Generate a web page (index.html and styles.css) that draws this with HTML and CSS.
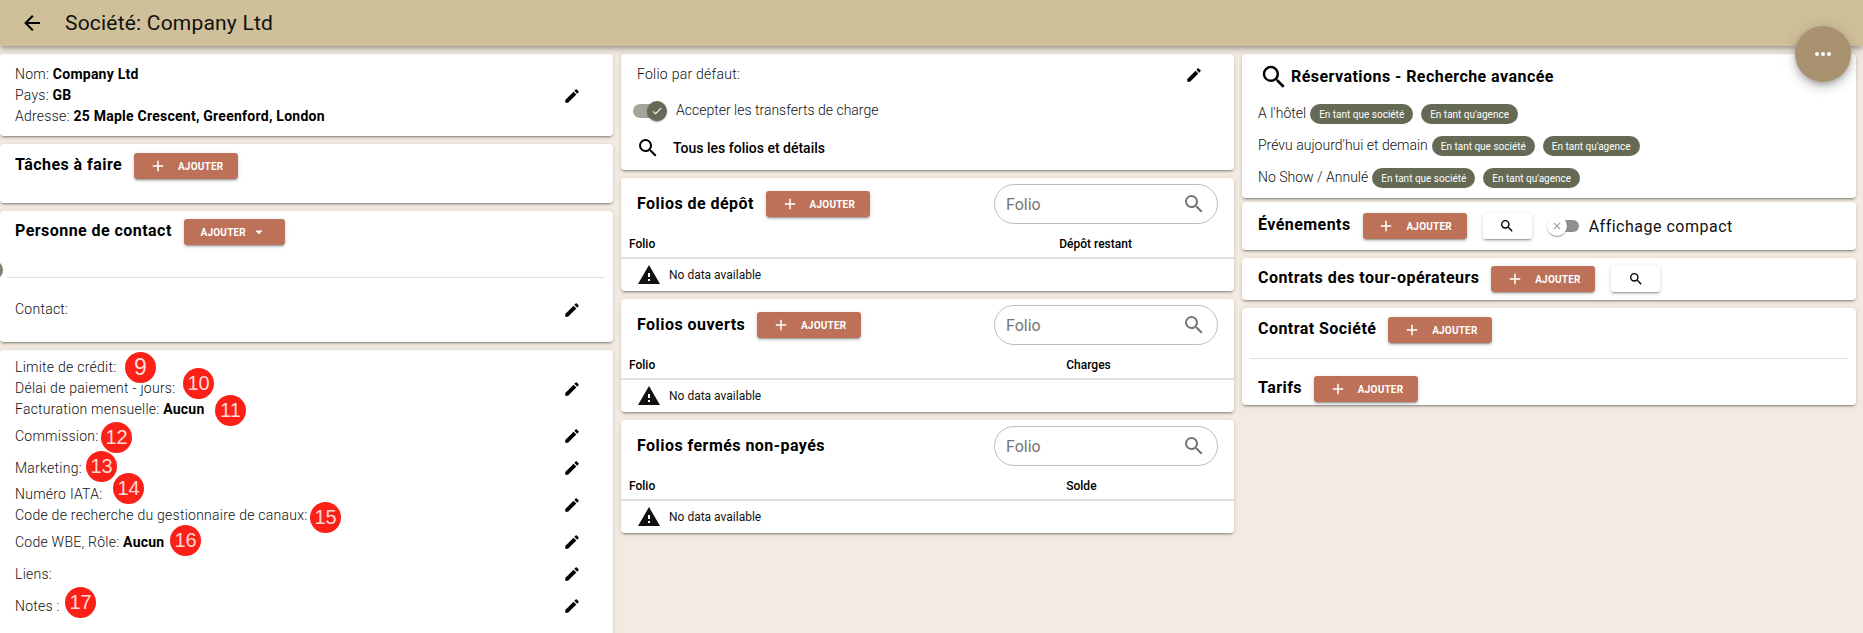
FILE: index.html
```html
<!DOCTYPE html>
<html lang="fr">
<head>
<meta charset="utf-8">
<title>Société: Company Ltd</title>
<link rel="stylesheet" href="styles.css">
</head>
<body>
<svg class="sprite" aria-hidden="true">
  <symbol id="i-pencil" viewBox="0 0 24 24"><path d="M20.71,7.04C21.1,6.65 21.1,6 20.71,5.63L18.37,3.29C18,2.9 17.35,2.9 16.96,3.29L15.12,5.12L18.87,8.87M3,17.25V21H6.75L17.81,9.93L14.06,6.18L3,17.25Z"/></symbol>
  <symbol id="i-search" viewBox="0 0 24 24"><path d="M9.5,3A6.5,6.5 0 0,1 16,9.5C16,11.11 15.41,12.59 14.44,13.73L14.71,14H15.5L20.5,19L19,20.5L14,15.5V14.71L13.73,14.44C12.59,15.41 11.11,16 9.5,16A6.5,6.5 0 0,1 3,9.5A6.5,6.5 0 0,1 9.5,3M9.5,5C7,5 5,7 5,9.5C5,12 7,14 9.5,14C12,14 14,12 14,9.5C14,7 12,5 9.5,5Z"/></symbol>
  <symbol id="i-plus" viewBox="0 0 24 24"><path d="M19,13H13V19H11V13H5V11H11V5H13V11H19V13Z"/></symbol>
  <symbol id="i-back" viewBox="0 0 24 24"><path d="M20,11V13H8L13.5,18.5L12.08,19.92L4.16,12L12.08,4.08L13.5,5.5L8,11H20Z"/></symbol>
  <symbol id="i-alert" viewBox="0 0 24 24"><path d="M13,14H11V10H13M13,18H11V16H13M1,21H23L12,2L1,21Z"/></symbol>
  <symbol id="i-down" viewBox="0 0 24 24"><path d="M7,10L12,15L17,10H7Z"/></symbol>
  <symbol id="i-dots" viewBox="0 0 24 24"><path d="M16,12A2,2 0 0,1 18,10A2,2 0 0,1 20,12A2,2 0 0,1 18,14A2,2 0 0,1 16,12M10,12A2,2 0 0,1 12,10A2,2 0 0,1 14,12A2,2 0 0,1 12,14A2,2 0 0,1 10,12M4,12A2,2 0 0,1 6,10A2,2 0 0,1 8,12A2,2 0 0,1 6,14A2,2 0 0,1 4,12Z"/></symbol>
  <symbol id="i-check" viewBox="0 0 24 24"><path d="M21,7L9,19L3.5,13.5L4.91,12.09L9,16.17L19.59,5.59L21,7Z"/></symbol>
  <symbol id="i-close" viewBox="0 0 24 24"><path d="M19,6.41L17.59,5L12,10.59L6.41,5L5,6.41L10.59,12L5,17.59L6.41,19L12,13.41L17.59,19L19,17.59L13.41,12L19,6.41Z"/></symbol>
</svg>

<header class="topbar">
  <svg class="icon icon-24 back"><use href="#i-back"/></svg>
  <h1 class="page-title">Société: Company Ltd</h1>
</header>

<button class="fab" type="button" aria-label="Menu"><svg class="icon icon-24"><use href="#i-dots"/></svg></button>
<span class="edge-dot"></span>

<main class="columns">
  <section class="col">
    <div class="card card-info">
      <div class="edit-row">
        <div>
          <div class="line">Nom: <b>Company Ltd</b></div>
          <div class="line">Pays: <b>GB</b></div>
          <div class="line">Adresse: <b>25 Maple Crescent, Greenford, London</b></div>
        </div>
        <svg class="icon icon-18 pencil"><use href="#i-pencil"/></svg>
      </div>
    </div>

    <div class="card card-tasks">
      <div class="head-row">
        <h2 class="heading">Tâches à faire</h2>
        <button class="btn" type="button"><svg class="icon icon-18"><use href="#i-plus"/></svg><span>Ajouter</span></button>
      </div>
    </div>

    <div class="card card-contact">
      <div class="head-row">
        <h2 class="heading">Personne de contact</h2>
        <button class="btn btn-menu" type="button"><span>Ajouter</span><svg class="icon icon-18"><use href="#i-down"/></svg></button>
      </div>
      <hr class="divider contact-divider">
      <div class="edit-row contact-row">
        <div class="line">Contact:</div>
        <svg class="icon icon-18 pencil"><use href="#i-pencil"/></svg>
      </div>
    </div>

    <div class="card card-details">
      <div class="edit-row">
        <div>
          <div class="line">Limite de crédit:</div>
          <div class="line">Délai de paiement - jours:</div>
          <div class="line">Facturation mensuelle: <b>Aucun</b></div>
        </div>
        <svg class="icon icon-18 pencil"><use href="#i-pencil"/></svg>
      </div>
      <div class="edit-row single"><div class="line">Commission:</div><svg class="icon icon-18 pencil"><use href="#i-pencil"/></svg></div>
      <div class="edit-row single"><div class="line">Marketing:</div><svg class="icon icon-18 pencil"><use href="#i-pencil"/></svg></div>
      <div class="edit-row">
        <div>
          <div class="line">Numéro IATA:</div>
          <div class="line">Code de recherche du gestionnaire de canaux:</div>
        </div>
        <svg class="icon icon-18 pencil"><use href="#i-pencil"/></svg>
      </div>
      <div class="edit-row single"><div class="line">Code WBE, Rôle: <b>Aucun</b></div><svg class="icon icon-18 pencil"><use href="#i-pencil"/></svg></div>
      <div class="edit-row single"><div class="line">Liens:</div><svg class="icon icon-18 pencil"><use href="#i-pencil"/></svg></div>
      <div class="edit-row single"><div class="line">Notes :</div><svg class="icon icon-18 pencil"><use href="#i-pencil"/></svg></div>

      <span class="badge badge-large b9">9</span>
      <span class="badge b10">10</span>
      <span class="badge b11">11</span>
      <span class="badge b12">12</span>
      <span class="badge b13">13</span>
      <span class="badge b14">14</span>
      <span class="badge b15">15</span>
      <span class="badge b16">16</span>
      <span class="badge b17">17</span>
    </div>
  </section>

  <section class="col">
    <div class="card card-folio">
      <div class="folio-default">
        <div class="line">Folio par défaut:</div>
        <svg class="icon icon-18"><use href="#i-pencil"/></svg>
      </div>
      <div class="switch-row">
        <span class="switch switch-on"><span class="thumb"><svg class="icon icon-12"><use href="#i-check"/></svg></span></span>
        <span class="line">Accepter les transferts de charge</span>
      </div>
      <div class="all-folios">
        <svg class="icon icon-24"><use href="#i-search"/></svg>
        <span>Tous les folios et détails</span>
      </div>
    </div>

    <div class="card">
      <div class="table-head">
        <h2 class="heading">Folios de dépôt</h2>
        <button class="btn" type="button"><svg class="icon icon-18"><use href="#i-plus"/></svg><span>Ajouter</span></button>
        <div class="search"><span>Folio</span><svg class="icon icon-24"><use href="#i-search"/></svg></div>
      </div>
      <div class="thead"><span>Folio</span><span class="col-deposit">Dépôt restant</span></div>
      <div class="nodata"><svg class="icon icon-24"><use href="#i-alert"/></svg><span>No data available</span></div>
    </div>

    <div class="card">
      <div class="table-head">
        <h2 class="heading">Folios ouverts</h2>
        <button class="btn" type="button"><svg class="icon icon-18"><use href="#i-plus"/></svg><span>Ajouter</span></button>
        <div class="search"><span>Folio</span><svg class="icon icon-24"><use href="#i-search"/></svg></div>
      </div>
      <div class="thead"><span>Folio</span><span class="col-amount">Charges</span></div>
      <div class="nodata"><svg class="icon icon-24"><use href="#i-alert"/></svg><span>No data available</span></div>
    </div>

    <div class="card">
      <div class="table-head">
        <h2 class="heading">Folios fermés non-payés</h2>
        <div class="search"><span>Folio</span><svg class="icon icon-24"><use href="#i-search"/></svg></div>
      </div>
      <div class="thead"><span>Folio</span><span class="col-amount">Solde</span></div>
      <div class="nodata"><svg class="icon icon-24"><use href="#i-alert"/></svg><span>No data available</span></div>
    </div>
  </section>

  <section class="col col-right">
    <div class="card card-resa">
      <div class="resa-title">
        <svg class="icon icon-30"><use href="#i-search"/></svg>
        <h2 class="heading">Réservations - Recherche avancée</h2>
      </div>
      <div class="resa-row"><span class="line">A l'hôtel</span><span class="chip">En tant que société</span><span class="chip">En tant qu'agence</span></div>
      <div class="resa-row"><span class="line">Prévu aujourd'hui et demain</span><span class="chip">En tant que société</span><span class="chip">En tant qu'agence</span></div>
      <div class="resa-row"><span class="line">No Show / Annulé</span><span class="chip">En tant que société</span><span class="chip">En tant qu'agence</span></div>
    </div>

    <div class="card card-events">
      <div class="head-row">
        <h2 class="heading">Événements</h2>
        <button class="btn" type="button"><svg class="icon icon-18"><use href="#i-plus"/></svg><span>Ajouter</span></button>
        <button class="btn-white" type="button" aria-label="Rechercher"><svg class="icon icon-16"><use href="#i-search"/></svg></button>
        <span class="switch switch-off"><span class="thumb"><svg class="icon icon-12"><use href="#i-close"/></svg></span></span>
        <span class="compact-label">Affichage compact</span>
      </div>
    </div>

    <div class="card card-tour">
      <div class="head-row">
        <h2 class="heading">Contrats des tour-opérateurs</h2>
        <button class="btn" type="button"><svg class="icon icon-18"><use href="#i-plus"/></svg><span>Ajouter</span></button>
        <button class="btn-white" type="button" aria-label="Rechercher"><svg class="icon icon-16"><use href="#i-search"/></svg></button>
      </div>
    </div>

    <div class="card card-contract">
      <div class="head-row">
        <h2 class="heading">Contrat Société</h2>
        <button class="btn" type="button"><svg class="icon icon-18"><use href="#i-plus"/></svg><span>Ajouter</span></button>
      </div>
      <hr class="divider contract-divider">
      <div class="head-row rates-row">
        <h2 class="heading">Tarifs</h2>
        <button class="btn" type="button"><svg class="icon icon-18"><use href="#i-plus"/></svg><span>Ajouter</span></button>
      </div>
    </div>
  </section>
</main>
</body>
</html>
```

FILE: styles.css
```css
* { box-sizing: border-box; }
html, body { margin: 0; height: 633px; overflow: hidden; }
body {
  position: relative;
  background: #f3ebe1;
  color: #000;
  font-family: Roboto, "Liberation Sans", sans-serif;
  font-size: 14px;
}
.sprite { position: absolute; width: 0; height: 0; }
.icon { display: block; flex: none; fill: currentColor; }
.icon-12 { width: 12px; height: 12px; }
.icon-16 { width: 16px; height: 16px; }
.icon-18 { width: 18px; height: 18px; }
.icon-24 { width: 24px; height: 24px; }
.icon-30 { width: 30px; height: 30px; }

.topbar {
  position: relative;
  z-index: 2;
  display: flex;
  align-items: center;
  gap: 21px;
  height: 46px;
  padding-left: 20px;
  background: #cfc09a;
  box-shadow: 0 2px 4px -1px rgba(0,0,0,.2), 0 4px 5px rgba(0,0,0,.14), 0 1px 10px rgba(0,0,0,.12);
}
.page-title { margin: 0; font-size: 21px; font-weight: 400; letter-spacing: .2px; line-height: 1; color: #111; }

.fab {
  position: absolute;
  z-index: 3;
  left: 1795px;
  top: 26px;
  display: flex;
  align-items: center;
  justify-content: center;
  width: 56px;
  height: 56px;
  padding: 0;
  border: 0;
  border-radius: 50%;
  background: #a8926f;
  color: #fff;
  box-shadow: 0 3px 5px -1px rgba(0,0,0,.2), 0 6px 10px rgba(0,0,0,.14), 0 1px 18px rgba(0,0,0,.12);
}
.edge-dot {
  position: absolute;
  z-index: 3;
  left: -17px;
  top: 260px;
  width: 20px;
  height: 20px;
  border-radius: 50%;
  background: #7d8070;
}

.columns {
  display: grid;
  grid-template-columns: 613px 613px 614px;
  gap: 8px;
  padding-top: 8px;
}
.col { display: flex; flex-direction: column; gap: 8px; min-width: 0; }
.card {
  position: relative;
  background: #fff;
  border-radius: 4px;
  box-shadow: 0 3px 1px -2px rgba(0,0,0,.2), 0 2px 2px rgba(0,0,0,.14), 0 1px 5px rgba(0,0,0,.12);
}

.line { font-weight: 300; line-height: 21px; color: #111; }
.line b { font-weight: 700; color: #000; }
.edit-row .line, .folio-default .line { letter-spacing: .25px; }
.heading { margin: 0; font-size: 16px; font-weight: 700; letter-spacing: .45px; line-height: 24px; white-space: nowrap; }

.edit-row { display: flex; align-items: center; justify-content: space-between; padding: 0 32px 0 15px; }
.single { height: 32px; }

.card-info { height: 82px; padding-top: 10px; }
.head-row { display: flex; align-items: center; }
.head-row .heading { margin-bottom: 2px; }
.table-head .heading { margin-bottom: 1px; }
.card-tasks { height: 59px; padding: 9px 15px; }
.card-contact { height: 131px; padding: 8px 0 0; }
.card-contact .head-row { padding-left: 15px; }
.contact-divider { margin: 32px 8px 0 7px; }
.contact-row { margin-top: 21px; }
.divider { border: 0; border-top: 1px solid #e0e0e0; }
.card-details { height: 300px; padding-top: 7px; }

.btn {
  display: inline-flex;
  align-items: center;
  justify-content: center;
  gap: 11px;
  width: 104px;
  height: 26px;
  margin-left: 12px;
  padding: 0;
  border: 0;
  border-radius: 3px;
  background: #bc7158;
  color: #fff;
  font: 700 10px Roboto, "Liberation Sans", sans-serif;
  letter-spacing: .2px;
  text-transform: uppercase;
  box-shadow: 0 3px 1px -2px rgba(0,0,0,.2), 0 2px 2px rgba(0,0,0,.14), 0 1px 5px rgba(0,0,0,.12);
}
.btn-menu { width: 101px; gap: 4px; }
.btn-white {
  display: inline-flex;
  align-items: center;
  justify-content: center;
  width: 49px;
  height: 26px;
  margin-left: 16px;
  padding: 0;
  border: 0;
  border-radius: 3px;
  background: #fff;
  color: #000;
  box-shadow: 0 3px 1px -2px rgba(0,0,0,.2), 0 2px 2px rgba(0,0,0,.14), 0 1px 5px rgba(0,0,0,.12);
}

.badge {
  position: absolute;
  display: flex;
  align-items: center;
  justify-content: center;
  width: 31px;
  height: 31px;
  border-radius: 50%;
  background: #fb2018;
  color: #ffd9d6;
  font: 400 20px "Liberation Sans", Arial, sans-serif;
}
.badge-large { font-size: 23px; }
.b9 { left: 125px; top: 2px; }
.b10 { left: 183px; top: 18px; }
.b11 { left: 215px; top: 45px; }
.b12 { left: 101px; top: 72px; }
.b13 { left: 86px; top: 101px; }
.b14 { left: 113px; top: 123px; }
.b15 { left: 310px; top: 152px; }
.b16 { left: 170px; top: 175px; }
.b17 { left: 65px; top: 237px; }

.card-folio { height: 116px; padding: 10px 31px 0 16px; }
.folio-default { display: flex; align-items: center; justify-content: space-between; height: 21px; }
.switch-row { display: flex; align-items: center; gap: 13px; margin: 15px 0 0 -4px; }
.all-folios { display: flex; align-items: center; gap: 13px; margin: 15px 0 0 -1px; font-weight: 500; }

.switch { position: relative; display: block; flex: none; border-radius: 7px; }
.thumb {
  position: absolute;
  display: flex;
  align-items: center;
  justify-content: center;
  width: 20px;
  height: 20px;
  border-radius: 50%;
  box-shadow: 0 2px 1px -1px rgba(0,0,0,.2), 0 1px 1px rgba(0,0,0,.14), 0 1px 3px rgba(0,0,0,.12);
}
.switch-on { width: 30px; height: 14px; background: #a4a69a; }
.switch-on .thumb { left: 14px; top: -3px; background: #646a54; color: #fff; }
.switch-off { width: 30px; height: 12px; margin-left: 17px; background: #8f8f8f; }
.switch-off .thumb { left: -2px; top: -4px; background: #fff; color: #999; }
.compact-label { margin-left: 10px; font-size: 16px; letter-spacing: .5px; color: #111; }

.table-head { display: flex; align-items: center; height: 52px; padding: 6px 16px 6px 16px; }
.search {
  display: flex;
  align-items: center;
  justify-content: space-between;
  width: 224px;
  height: 40px;
  margin-left: auto;
  padding: 0 11px;
  border: 1px solid #bdbdbd;
  border-radius: 20px;
  color: #757575;
  font-size: 16px;
}
.thead {
  display: flex;
  height: 29px;
  padding: 7px 0 0 8px;
  border-bottom: 2px solid #e0e0e0;
  font-size: 12px;
  font-weight: 500;
  line-height: 14px;
}
.col-deposit { margin-left: 404px; }
.col-amount { margin-left: 411px; }
.nodata { display: flex; align-items: center; gap: 8px; height: 32px; padding-left: 16px; font-size: 12px; color: #111; }

.card-resa { height: 144px; padding: 11px 16px 0; }
.resa-title { display: flex; align-items: center; gap: 2px; height: 24px; margin-left: 1px; }
.resa-row { display: flex; align-items: center; gap: 8px; height: 20px; margin-top: 12px; }
.resa-row .line { margin: 0 -4px 2px 0; }
.resa-title + .resa-row { margin-top: 15px; }
.chip {
  display: inline-flex;
  align-items: center;
  height: 20px;
  padding: 0 9px;
  border-radius: 10px;
  background: #646a54;
  color: #fff;
  font-size: 10px;
  white-space: nowrap;
}
.card-events { height: 48px; margin-top: -4px; padding: 11px 16px; }
.card-tour { height: 42px; padding: 8px 16px; }
.card-contract { height: 97px; padding: 9px 0 0; }
.card-contract .head-row { padding-left: 16px; }
.contract-divider { margin: 15px 8px 0; }
.rates-row { margin-top: 17px; }
```
